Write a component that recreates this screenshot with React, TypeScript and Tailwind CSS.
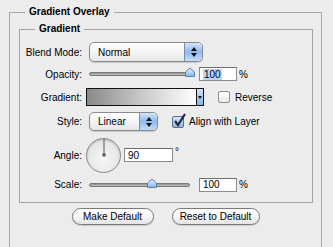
import React from "react";

function Stepper() {
  return (
    <div className="flex h-full w-[18px] flex-col items-center justify-center gap-[2px] rounded-r-[5px] border-l border-[#7d8ea6] bg-gradient-to-b from-[#d3e5fa] via-[#8dbbef] to-[#c2dcf8]">
      <svg width="6" height="4" viewBox="0 0 6 4">
        <path d="M0 4 L3 0 L6 4 Z" fill="#111" />
      </svg>
      <svg width="6" height="4" viewBox="0 0 6 4">
        <path d="M0 0 L3 4 L6 0 Z" fill="#111" />
      </svg>
    </div>
  );
}

function Select({ value, width }: { value: string; width: string }) {
  return (
    <div
      className={`flex h-full ${width} items-stretch overflow-hidden rounded-[5px] border border-[#8a8a8a] bg-gradient-to-b from-white via-[#f4f4f4] to-[#e6e6e6] shadow-[0_1px_1px_rgba(0,0,0,0.15)]`}
    >
      <span className="flex flex-1 items-center pl-[8px]">{value}</span>
      <Stepper />
    </div>
  );
}

function Slider({ pos }: { pos: number }) {
  return (
    <div className="relative h-full w-[106px]">
      <div className="absolute left-0 top-1/2 h-[4px] w-[101px] -translate-y-1/2 rounded-full border border-[#7a7a7a] bg-gradient-to-b from-[#8f8f8f] to-[#c4c4c4]" />
      <svg
        className="absolute top-1/2 -translate-y-[7px]"
        style={{ left: pos - 6 }}
        width="12"
        height="11"
        viewBox="0 0 12 11"
      >
        <defs>
          <linearGradient id={`th${pos}`} x1="0" y1="0" x2="0" y2="1">
            <stop offset="0" stopColor="#e6f1fd" />
            <stop offset="1" stopColor="#86b6ea" />
          </linearGradient>
        </defs>
        <path
          d="M1.5 5 L6 1 L10.5 5 L10.5 9.5 L1.5 9.5 Z"
          fill={`url(#th${pos})`}
          stroke="#5c7fa6"
          strokeWidth="1"
        />
      </svg>
    </div>
  );
}

function Field({
  value,
  width,
  selected,
}: {
  value: string;
  width: string;
  selected?: boolean;
}) {
  return (
    <div
      className={`flex h-[14px] ${width} items-center border border-[#8c8c8c] border-t-[#6e6e6e] bg-white pl-[3px]`}
    >
      <span className={selected ? "bg-[#b5d5ff] px-[1px] leading-[11px]" : "leading-[11px]"}>{value}</span>
    </div>
  );
}

function Checkbox({ checked }: { checked?: boolean }) {
  return (
    <div
      className={`relative h-[12px] w-[12px] rounded-[2px] border ${
        checked
          ? "border-[#5a6f8c] bg-gradient-to-b from-[#d7e7f8] to-[#8fb7e4]"
          : "border-[#8e8e8e] bg-gradient-to-b from-white to-[#e8e8e8]"
      }`}
    >
      {checked && (
        <svg className="absolute -top-[4px] left-[0px]" width="14" height="14" viewBox="0 0 14 14">
          <path d="M2 8 L5 12 L12 1" fill="none" stroke="#1c2a3c" strokeWidth="2.2" />
        </svg>
      )}
    </div>
  );
}

function Row({ label, h, mt, children }: { label: string; h: string; mt: string; children: React.ReactNode }) {
  return (
    <div className={`flex ${h} ${mt} items-center`}>
      <span className="w-[62px] text-right">{label}</span>
      {children}
    </div>
  );
}

// group box: border with a title sitting on the top line
function GroupTitle({ children }: { children: React.ReactNode }) {
  return (
    <span className="absolute left-[15px] top-[-7px] bg-[#ececec] px-[4px] font-bold leading-[12px]">
      {children}
    </span>
  );
}

export default function App() {
  return (
    <div
      className="h-[247px] w-[333px] overflow-hidden bg-[#ececec] pt-[12px] text-[10px] text-black"
      style={{ fontFamily: '"Liberation Sans", Arial, sans-serif' }}
    >
      <div className="relative ml-[9px] h-[260px] w-[313px] border border-[#a4a4a4]">
        <GroupTitle>Gradient Overlay</GroupTitle>

        <div className="relative ml-[9px] mt-[16px] w-[294px] border border-[#a4a4a4] pb-[10px]">
          <GroupTitle>Gradient</GroupTitle>

          <Row label="Blend Mode:" h="h-[20px]" mt="mt-[12px]">
            <div className="ml-[7px] h-full">
              <Select value="Normal" width="w-[114px]" />
            </div>
          </Row>

          <Row label="Opacity:" h="h-[16px]" mt="mt-[4px]">
            <div className="ml-[7px] h-full">
              <Slider pos={101} />
            </div>
            <div className="ml-[4px]">
              <Field value="100" width="w-[38px]" selected />
            </div>
            <span className="ml-[2px]">%</span>
          </Row>

          <Row label="Gradient:" h="h-[18px]" mt="mt-[6px]">
            <div className="ml-[4px] flex h-full w-[118px] border-[1.5px] border-[#111]">
              <div className="flex-1 bg-gradient-to-r from-[#8a8a8a] via-[#c9c9c9] to-white" />
              <div className="flex w-[7px] items-center justify-center border-l border-[#111] bg-gradient-to-b from-[#cfe2f8] to-[#86b4e8]">
                <svg width="4" height="3" viewBox="0 0 4 3">
                  <path d="M0 0 L2 3 L4 0 Z" fill="#111" />
                </svg>
              </div>
            </div>
            <div className="ml-[14px]">
              <Checkbox />
            </div>
            <span className="ml-[5px]">Reverse</span>
          </Row>

          <Row label="Style:" h="h-[19px]" mt="mt-[6px]">
            <div className="ml-[7px] h-full">
              <Select value="Linear" width="w-[69px]" />
            </div>
            <div className="ml-[14px]">
              <Checkbox checked />
            </div>
            <span className="ml-[5px]">Align with Layer</span>
          </Row>

          <Row label="Angle:" h="h-[36px]" mt="mt-[6px]">
            <div className="relative ml-[4px] h-[35px] w-[35px] rounded-full border-[1.5px] border-[#8a8a8a] bg-[radial-gradient(circle_at_50%_60%,#f7f7f7,#dcdcdc)] shadow-[inset_0_1px_2px_rgba(0,0,0,0.2)]">
              <div className="absolute left-1/2 top-0 h-1/2 w-px -translate-x-1/2 bg-[#555]" />
              <div className="absolute left-1/2 top-1/2 h-[3px] w-[3px] -translate-x-1/2 -translate-y-1/2 bg-[#555]" />
            </div>
            <div className="ml-[3px]">
              <Field value="90" width="w-[49px]" />
            </div>
            <span className="ml-[2px] self-start pt-[11px] leading-[8px]">°</span>
          </Row>

          <Row label="Scale:" h="h-[15px]" mt="mt-[4px]">
            <div className="ml-[7px] h-full">
              <Slider pos={63} />
            </div>
            <div className="ml-[4px]">
              <Field value="100" width="w-[38px]" />
            </div>
            <span className="ml-[2px]">%</span>
          </Row>
        </div>

        <div className="mt-[5px] flex justify-center gap-[18px]">
          <button className="h-[17px] w-[82px] rounded-full border border-[#7a7a7a] bg-gradient-to-b from-white via-[#f6f6f6] to-[#e4e4e4] text-[10px] leading-[15px] shadow-[0_1px_1px_rgba(0,0,0,0.15)]">
            Make Default
          </button>
          <button className="h-[17px] w-[88px] rounded-full border border-[#7a7a7a] bg-gradient-to-b from-white via-[#f6f6f6] to-[#e4e4e4] text-[10px] leading-[15px] shadow-[0_1px_1px_rgba(0,0,0,0.15)]">
            Reset to Default
          </button>
        </div>
      </div>
    </div>
  );
}
